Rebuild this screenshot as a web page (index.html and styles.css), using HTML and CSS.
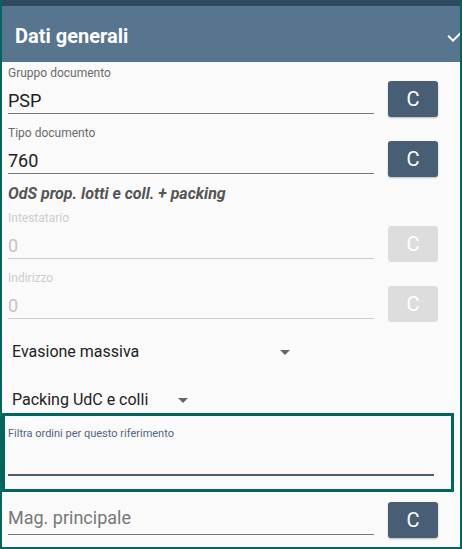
FILE: index.html
```html
<!DOCTYPE html>
<html lang="it">
<head>
<meta charset="utf-8">
<title>Dati generali</title>
<link rel="stylesheet" href="styles.css">
</head>
<body>
<div class="frame">
  <div class="status"></div>
  <header class="toolbar">
    <h1 class="title">Dati generali</h1>
    <svg class="check" width="24" height="24" viewBox="0 0 24 24"><path d="M9 16.17L4.83 12l-1.42 1.41L9 19 21 7l-1.41-1.41z" fill="#fff"/></svg>
  </header>
  <main class="content">
    <div class="row">
      <div class="field">
        <div class="label">Gruppo documento</div>
        <div class="value">PSP</div>
      </div>
      <button class="btn">C</button>
    </div>
    <div class="row">
      <div class="field">
        <div class="label">Tipo documento</div>
        <div class="value">760</div>
      </div>
      <button class="btn">C</button>
    </div>
    <div class="doc-desc">OdS prop. lotti e coll. + packing</div>
    <div class="row row-first-after-desc disabled">
      <div class="field">
        <div class="label">Intestatario</div>
        <div class="value">0</div>
      </div>
      <button class="btn">C</button>
    </div>
    <div class="row disabled">
      <div class="field">
        <div class="label">Indirizzo</div>
        <div class="value">0</div>
      </div>
      <button class="btn">C</button>
    </div>
    <div class="spinner spinner-wide">
      <span class="spinner-text">Evasione massiva</span>
      <span class="arrow"></span>
    </div>
    <div class="spinner spinner-wrap">
      <span class="spinner-text">Packing UdC e colli</span>
      <span class="arrow"></span>
    </div>
    <div class="filter-box">
      <div class="filter-label">Filtra ordini per questo riferimento</div>
      <div class="filter-input"></div>
    </div>
    <div class="row row-last">
      <div class="field field-hint">
        <div class="value hint">Mag. principale</div>
      </div>
      <button class="btn">C</button>
    </div>
  </main>
</div>
</body>
</html>
```
FILE: styles.css
```css
* { box-sizing: border-box; }
html, body { margin: 0; padding: 0; }
body {
  background: #fafafa;
  font-family: Roboto, "Noto Sans", "Liberation Sans", sans-serif;
  width: 462px;
  height: 549px;
  overflow: hidden;
}
.frame {
  width: 462px;
  height: 549px;
  border: 2px solid #00675f;
  border-top: 0;
  background: #fafafa;
  overflow: hidden;
}
.status {
  height: 6px;
  background: #2f4a5e;
}
.toolbar {
  height: 56px;
  background: #57758f;
  padding: 18px 0 14px 13px;
  display: flex;
  align-items: flex-start;
  position: relative;
  overflow: hidden;
}
.title {
  margin: 0;
  font-size: 20px;
  line-height: 24px;
  font-weight: bold;
  color: #ffffff;
}
.check {
  position: absolute;
  left: 442px;
  top: 17px;
}
.content {
  padding: 4px 22px 0 6px;
}
.row {
  display: flex;
  align-items: flex-start;
  gap: 14px;
}
.row + .row { margin-top: 9px; }
.field {
  flex: 1;
}
.label {
  font-size: 12px;
  line-height: 14px;
  color: #6a6a6a;
}
.value {
  margin-top: 9px;
  font-size: 18px;
  line-height: 24px;
  color: #202020;
  border-bottom: 1px solid #7a7a7a;
}
.btn {
  margin-top: 15px;
  width: 50px;
  height: 36px;
  flex: none;
  border: 0;
  border-radius: 3px;
  background: #475e75;
  color: #ffffff;
  font-family: Roboto, "Noto Sans", sans-serif;
  font-size: 20px;
  line-height: 36px;
  padding: 0;
  box-shadow: 0 1px 2px rgba(0,0,0,0.25);
}
.disabled .label { color: #cdcdcd; }
.disabled .value { color: #c4c4c4; border-bottom-color: #cfcfcf; }
.disabled .btn { background: #dddddd; box-shadow: none; }
.doc-desc {
  margin-top: 7px;
  font-size: 16px;
  line-height: 20px;
  font-weight: bold;
  font-style: italic;
  color: #555555;
}
.row.row-first-after-desc { margin-top: 7px; }
.spinner {
  display: flex;
  align-items: flex-start;
  padding-left: 4px;
  font-size: 16px;
  line-height: 20px;
  color: #222222;
}
.spinner-wide { width: 282px; margin-top: 20px; }
.spinner-wide .arrow { margin-left: auto; }
.spinner-wrap { margin-top: 28px; }
.spinner-wrap .arrow { margin-left: 30px; }
.arrow {
  margin-top: 8px;
  width: 0;
  height: 0;
  border-left: 5px solid transparent;
  border-right: 5px solid transparent;
  border-top: 5px solid #666666;
}
.filter-box {
  margin: 3px -16px 0 -6px;
  height: 79px;
  border: 3px solid #00675f;
  padding: 11px 17px 13px 3px;
}
.filter-label {
  font-size: 11px;
  line-height: 13px;
  color: #4d6782;
}
.filter-input {
  height: 36px;
  border-bottom: 2px solid #475e75;
}
.row.row-last {
  margin-top: 10px;
  align-items: flex-end;
}
.row-last .btn { margin-top: 0; }
.field-hint { margin-bottom: 3px; }
.value.hint {
  margin-top: 0;
  padding-bottom: 4px;
  color: #777777;
}
```
